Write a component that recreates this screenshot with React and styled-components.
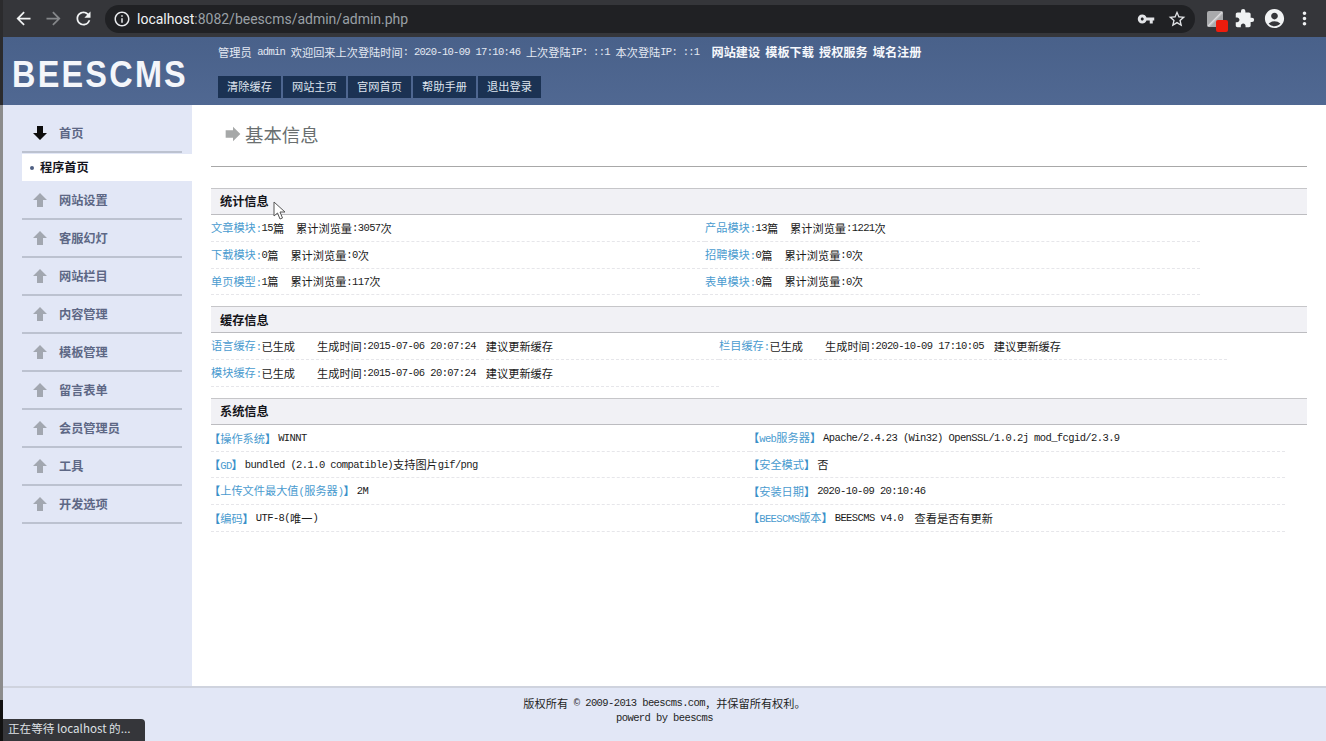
import React from 'react';
import styled, { createGlobalStyle } from 'styled-components';
import { MdArrowBack, MdArrowForward, MdRefresh, MdInfoOutline, MdVpnKey, MdStarBorder, MdExtension, MdAccountCircle, MdMoreVert } from 'react-icons/md';

const Global = createGlobalStyle`
  html, body { margin: 0; padding: 0; height: 100%; overflow: hidden; background: #fff; }
  #root { height: 100%; }
  * { box-sizing: border-box; }
`;

const CJK = `"Noto Sans CJK SC", "Noto Sans", sans-serif`;

const Latin = styled.span`
  font: 10.5px/1 "Liberation Mono", monospace;
  letter-spacing: -0.6px;
`;

const Page = styled.div`
  position: relative;
  width: 1326px;
  height: 741px;
  padding-left: 3px;
  display: flex;
  flex-direction: column;
  overflow: hidden;
  font: 11.2px/1 ${CJK};
  color: #111;
  background: linear-gradient(#2b2b2d 0 105px, #8c8c8c 105px 700px, #111 700px);
`;

const Chrome = styled.div`
  height: 37px;
  flex: none;
  display: flex;
  align-items: center;
  background: #35363a;
  color: #f1f3f4;
`;
const NavBtn = styled.span`
  width: 30px;
  display: flex;
  justify-content: center;
  color: ${p => (p.$dim ? '#85878a' : '#f1f3f4')};
  font-size: 21px;
`;
const NavGroup = styled.div`
  display: flex;
  margin-left: 5px;
`;
const Omnibox = styled.div`
  width: 1090px;
  height: 28px;
  margin-left: 7px;
  padding: 0 8px 0 8px;
  border-radius: 14px;
  background: #202124;
  display: flex;
  align-items: center;
  font: 14px Roboto, "Liberation Sans", sans-serif;
  color: #9aa0a6;
`;
const Host = styled.span`
  color: #f1f3f4;
  margin-left: 6px;
`;
const OmniIcons = styled.div`
  margin-left: auto;
  display: flex;
  align-items: center;
  gap: 12px;
  font-size: 18px;
  color: #e2e4e7;
`;
const ToolIcons = styled.div`
  margin-left: 12px;
  display: flex;
  align-items: center;
  gap: 8px;
  font-size: 21px;
  color: #f1f3f4;
`;
const ExtIcon = styled.span`
  position: relative;
  width: 16px;
  height: 16px;
  border-radius: 2px;
  background: linear-gradient(135deg, #a9aaac 45%, #dcdcde 50%, #a9aaac 60%);
  margin-right: 3px;
  &::after {
    content: '';
    position: absolute;
    right: -5px;
    bottom: -5px;
    width: 12px;
    height: 12px;
    border-radius: 2px;
    background: #ee1c0c;
  }
`;

const Header = styled.header`
  height: 68px;
  flex: none;
  display: flex;
  background: linear-gradient(#49618a, #506892);
`;
const LogoBox = styled.div`
  width: 215px;
  padding: 20px 0 0 9px;
`;
const Logo = styled.div`
  font: bold 36px/1 "Liberation Sans", sans-serif;
  letter-spacing: 2.5px;
  color: #f4f6fa;
  transform: scaleX(0.9);
  transform-origin: left center;
`;
const HeadMain = styled.div`
  display: flex;
  flex-direction: column;
  padding-top: 9px;
`;
const Welcome = styled.div`
  height: 13px;
  display: flex;
  align-items: center;
  color: #e4e9f3;
  white-space: pre;
  ${Latin} { letter-spacing: -0.7px; }
`;
const HeadLinks = styled.div`
  margin-left: 12px;
  display: flex;
  gap: 5px;
  font-size: 12.2px;
  font-weight: 700;
  color: #f6f8fc;
`;
const Buttons = styled.div`
  margin-top: 17px;
  display: flex;
  gap: 2px;
`;
const HeadBtn = styled.a`
  width: 63px;
  height: 22px;
  display: flex;
  align-items: center;
  justify-content: center;
  background: #1b3253;
  color: #dfe5ef;
`;

const Body = styled.div`
  flex: 1;
  min-height: 0;
  display: flex;
  background: #fff;
`;
const Sidebar = styled.nav`
  width: 189px;
  flex: none;
  padding: 10px 0 0 19px;
  background: #e2e7f6;
  font-size: 12.2px;
`;
const NavItem = styled.div`
  width: 160px;
  height: 38px;
  display: flex;
  align-items: center;
  gap: 11px;
  padding-left: 10px;
  border-bottom: 2px solid #bcc2d0;
  font-weight: 700;
  color: #5d6785;
`;
const Selected = styled.div`
  height: 27px;
  margin: 1px 0;
  display: flex;
  align-items: center;
  gap: 6px;
  padding-left: 8px;
  background: #fff;
  font-weight: 700;
  color: #15151d;
`;
const Dot = styled.i`
  width: 4px;
  height: 4px;
  border-radius: 50%;
  background: #4f5f82;
`;

const Main = styled.main`
  flex: 1;
  min-width: 0;
  padding: 0 19px;
`;
const TitleBar = styled.div`
  height: 62px;
  padding: 18px 0 0 14px;
  display: flex;
  align-items: flex-start;
  gap: 4px;
  border-bottom: 1px solid #a8a8a8;
  font-size: 18.4px;
  line-height: 22px;
  color: #6a6f70;
`;
const Section = styled.section`
  margin-top: ${p => p.$top}px;
`;
const SectionHead = styled.h2`
  margin: 0;
  height: 27px;
  padding: 0 9px;
  display: flex;
  align-items: center;
  border-top: 1px solid #c6c6c9;
  border-bottom: 1px solid #bcbcc0;
  background: #f1f1f5;
  font-size: 12.2px;
  font-weight: 700;
  color: #15151a;
`;
const Grid = styled.div`
  display: grid;
  grid-template-columns: ${p => p.$cols};
`;
const Row = styled.div`
  height: 26.75px;
  display: flex;
  align-items: center;
  padding-top: 1px;
  border-bottom: 1px dashed #e6e6ea;
  white-space: pre;
  color: #1a1a1a;
`;
const Label = styled.span`
  color: #4a9bcf;
`;
const SysLabel = styled(Label)`
  margin: 0 2px 0 -2px;
`;
const Bracket = styled.b`
  font-weight: 700;
  color: #3a8fc8;
`;
const Gap = styled.span`
  margin-left: ${p => p.$w}px;
`;

const Footer = styled.footer`
  height: 55px;
  flex: none;
  padding-top: 8px;
  border-top: 2px solid #cfd3de;
  background: #e2e7f6;
  text-align: center;
  color: #1f1f25;
`;
const FootLine = styled.div`
  height: 15px;
  display: flex;
  align-items: center;
  justify-content: center;
  white-space: pre;
`;
const Status = styled.div`
  position: absolute;
  left: 3px;
  bottom: 0;
  width: 142px;
  height: 22px;
  padding: 4px 0 0 5px;
  border-radius: 0 4px 0 0;
  background: #35363a;
  color: #dfe1e5;
  font-size: 11.6px;
  white-space: pre;
`;
const Cursor = styled.svg`
  position: absolute;
  left: 273px;
  top: 201px;
`;

/* Renders ASCII runs in the narrow mono face, CJK runs in the body face. */
const Mix = ({ children }) =>
  String(children)
    .split(/([\x20-\x7e©]+)/)
    .map((part, i) => (i % 2 ? <Latin key={i}>{part}</Latin> : part));

const DownArrow = ({ up }) => (
  <svg width="16" height="16" viewBox="0 0 16 16" style={{ flex: 'none' }}>
    {up ? (
      <path d="M8 1 L15 8 H11 V15 H5 V8 H1 Z" fill="#a2a7b0" />
    ) : (
      <path d="M5 1 H11 V8 H15 L8 15 L1 8 H5 Z" fill="#0c0c0c" />
    )}
  </svg>
);

const navItems = ['网站设置', '客服幻灯', '网站栏目', '内容管理', '模板管理', '留言表单', '会员管理员', '工具', '开发选项'];

const stats = [
  ['文章模块', '15篇', '累计浏览量:3057次'],
  ['产品模块', '13篇', '累计浏览量:1221次'],
  ['下载模块', '0篇', '累计浏览量:0次'],
  ['招聘模块', '0篇', '累计浏览量:0次'],
  ['单页模型', '1篇', '累计浏览量:117次'],
  ['表单模块', '0篇', '累计浏览量:0次'],
];
const caches = [
  ['语言缓存', '2015-07-06 20:07:24'],
  ['栏目缓存', '2020-10-09 17:10:05'],
  ['模块缓存', '2015-07-06 20:07:24'],
];
const system = [
  ['操作系统', 'WINNT'],
  ['web服务器', 'Apache/2.4.23 (Win32) OpenSSL/1.0.2j mod_fcgid/2.3.9'],
  ['GD', 'bundled (2.1.0 compatible)支持图片gif/png'],
  ['安全模式', '否'],
  ['上传文件最大值(服务器)', '2M'],
  ['安装日期', '2020-10-09 20:10:46'],
  ['编码', 'UTF-8(唯一)'],
  ['BEESCMS版本', 'BEESCMS v4.0  查看是否有更新'],
];

export default function App() {
  return (
    <Page>
      <Global />
      <Chrome>
        <NavGroup>
          <NavBtn><MdArrowBack /></NavBtn>
          <NavBtn $dim><MdArrowForward /></NavBtn>
          <NavBtn><MdRefresh /></NavBtn>
        </NavGroup>
        <Omnibox>
          <MdInfoOutline size={18} color="#e8eaed" />
          <Host>localhost</Host>:8082/beescms/admin/admin.php
          <OmniIcons><MdVpnKey /><MdStarBorder size={20} /></OmniIcons>
        </Omnibox>
        <ToolIcons>
          <ExtIcon />
          <MdExtension />
          <MdAccountCircle size={23} />
          <MdMoreVert />
        </ToolIcons>
      </Chrome>
      <Header>
        <LogoBox><Logo>BEESCMS</Logo></LogoBox>
        <HeadMain>
          <Welcome>
            <Mix>{'管理员 admin 欢迎回来上次登陆时间: 2020-10-09 17:10:46 上次登陆IP: ::1 本次登陆IP: ::1'}</Mix>
            <HeadLinks>
              <span>网站建设</span><span>模板下载</span><span>授权服务</span><span>域名注册</span>
            </HeadLinks>
          </Welcome>
          <Buttons>
            {['清除缓存', '网站主页', '官网首页', '帮助手册', '退出登录'].map(t => <HeadBtn key={t}>{t}</HeadBtn>)}
          </Buttons>
        </HeadMain>
      </Header>
      <Body>
        <Sidebar>
          <NavItem><DownArrow />首页</NavItem>
          <Selected><Dot />程序首页</Selected>
          {navItems.map(t => <NavItem key={t}><DownArrow up />{t}</NavItem>)}
        </Sidebar>
        <Main>
          <TitleBar>
            <svg width="16" height="22" viewBox="0 0 16 24"><path d="M0 8 H8 V4 L16 12 L8 20 V16 H0 Z" fill="#a6a8a8" /></svg>
            基本信息
          </TitleBar>
          <Section $top={21}>
            <SectionHead>统计信息</SectionHead>
            <Grid $cols="494px 495px">
              {stats.map(([a, b, c]) => (
                <Row key={a}>
                  <Label>{a}<Latin>:</Latin></Label><Mix>{b}</Mix><Gap $w={12} /><Mix>{c}</Mix>
                </Row>
              ))}
            </Grid>
          </Section>
          <Section $top={11}>
            <SectionHead>缓存信息</SectionHead>
            <Grid $cols="508px 508px">
              {caches.map(([a, d]) => (
                <Row key={a}>
                  <Label>{a}<Latin>:</Latin></Label>已生成<Gap $w={22} />生成时间<Latin>:{d}</Latin><Gap $w={10} />建议更新缓存
                </Row>
              ))}
            </Grid>
          </Section>
          <Section $top={11}>
            <SectionHead>系统信息</SectionHead>
            <Grid $cols="539px 535px">
              {system.map(([a, b]) => (
                <Row key={a}>
                  <SysLabel><Bracket>【</Bracket><Mix>{a}</Mix><Bracket>】</Bracket></SysLabel><Mix>{b}</Mix>
                </Row>
              ))}
            </Grid>
          </Section>
        </Main>
      </Body>
      <Footer>
        <FootLine><Mix>{'版权所有 © 2009-2013 beescms.com，并保留所有权利。'}</Mix></FootLine>
        <FootLine><Mix>powerd by beescms</Mix></FootLine>
      </Footer>
      <Status>正在等待 localhost 的...</Status>
      <Cursor width="13" height="20" viewBox="0 0 13 20">
        <path d="M1 1 V15 L4.5 12 L7 18 L9.5 17 L7 11 H12 Z" fill="#fff" stroke="#555" strokeWidth="1" />
      </Cursor>
    </Page>
  );
}
